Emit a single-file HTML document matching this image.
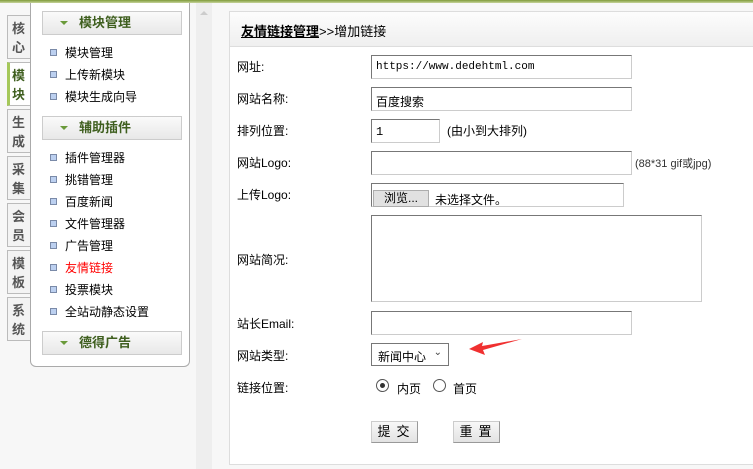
<!DOCTYPE html>
<html><head><meta charset="utf-8"><style>
*{margin:0;padding:0;box-sizing:border-box}
body{width:753px;height:469px;overflow:hidden;background:#f7f7f7;font-family:"Liberation Sans","Noto Sans CJK SC",sans-serif;font-size:12px;color:#000;position:relative}
.abs{position:absolute}
.top{left:0;top:0;width:753px;height:3px;background:linear-gradient(#7f9a3a,#c6d49a)}
.tab{position:absolute;left:7px;width:24px;height:44px;border:1px solid #bbb;border-right:none;background:#f3f3f3;color:#555;font-weight:bold;font-size:13px;line-height:19px;padding:3px 0 0 4px}
.tab.on{background:#fff;border-left:3px solid #a5c85a;color:#3f5f1f;padding-left:2px}
.menu{left:30px;top:3px;width:160px;height:364px;background:#fff;border:1px solid #aaa;border-top:none;border-radius:0 0 6px 6px}
.mh{position:absolute;left:11px;width:140px;height:24px;border:1px solid #ccc;background:linear-gradient(#fafafa,#e8e8e8);color:#3f5f1f;font-weight:bold;font-size:13px;line-height:22px;padding-left:36px}
.mh:before{content:"";position:absolute;left:17px;top:9px;border:4px solid transparent;border-top:4px solid #6a9a3a;border-bottom:none;width:0}
.mi{position:absolute;left:19px;font-size:12px;line-height:14px}
.mi:before{content:"";display:inline-block;width:5px;height:5px;border:1px solid #7a8aa8;background:#bcd0f0;margin-right:8px;vertical-align:1px}
.sb{left:196px;top:3px;width:16px;height:466px;background:#eee}
.panel{left:229px;top:11px;width:530px;height:454px;background:#fff;border:1px solid #ddd}
.hd{left:229px;top:11px;width:530px;height:36px;background:linear-gradient(#fdfdfd,#efefef);border:1px solid #ddd;padding:9px 0 0 11px;font-size:13px}
.lb{position:absolute;left:237px;font-size:12px}
.in{position:absolute;left:371px;height:24px;border:1px solid #ccc;border-top-color:#777;border-left-color:#777;background:#fff;font-size:12px;padding:5px 0 0 4px}
.btn{position:absolute;top:421px;height:22px;width:47px;background:linear-gradient(#f8f8f8,#e2e2e2);border:1px solid #ccc;border-right-color:#999;border-bottom-color:#999;font-size:13px;text-align:center;line-height:20px;letter-spacing:6px;padding-left:4px}
.rad{position:absolute;top:379px;width:13px;height:13px;border:1px solid #555;border-radius:50%;background:#fff}
</style></head><body>
<div class="abs top"></div>
<div class="tab" style="top:15px">核<br>心</div>
<div class="tab on" style="top:62px">模<br>块</div>
<div class="tab" style="top:109px">生<br>成</div>
<div class="tab" style="top:156px">采<br>集</div>
<div class="tab" style="top:203px">会<br>员</div>
<div class="tab" style="top:250px">模<br>板</div>
<div class="tab" style="top:297px">系<br>统</div>
<div class="abs menu">
<div class="mh" style="top:8px">模块管理</div>
<div class="mi" style="top:43px">模块管理</div>
<div class="mi" style="top:65px">上传新模块</div>
<div class="mi" style="top:87px">模块生成向导</div>
<div class="mh" style="top:113px">辅助插件</div>
<div class="mi" style="top:148px">插件管理器</div>
<div class="mi" style="top:170px">挑错管理</div>
<div class="mi" style="top:192px">百度新闻</div>
<div class="mi" style="top:214px">文件管理器</div>
<div class="mi" style="top:236px">广告管理</div>
<div class="mi" style="top:258px;color:#f00">友情链接</div>
<div class="mi" style="top:280px">投票模块</div>
<div class="mi" style="top:302px">全站动静态设置</div>
<div class="mh" style="top:328px">德得广告</div>
</div>
<div class="abs sb"><div style="position:absolute;left:4px;top:8px;border:4px solid transparent;border-bottom:4px solid #ccc;border-top:none"></div></div>
<div class="abs panel"></div>
<div class="abs hd"><b style="text-decoration:underline">友情链接管理</b>&gt;&gt;增加链接</div>
<div class="lb" style="top:58px">网址:</div>
<div class="in" style="top:55px;width:261px;font-family:'Liberation Mono',monospace;font-size:11px">https://www.dedehtml.com</div>
<div class="lb" style="top:90px">网站名称:</div>
<div class="in" style="top:87px;width:261px">百度搜索</div>
<div class="lb" style="top:122px">排列位置:</div>
<div class="in" style="top:119px;width:69px;font-family:'Liberation Mono',monospace">1</div>
<div class="lb" style="top:122px;left:447px">(由小到大排列)</div>
<div class="lb" style="top:154px">网站Logo:</div>
<div class="in" style="top:151px;width:261px"></div>
<div class="lb" style="top:155px;left:635px;font-size:11px;color:#333">(88*31 gif或jpg)</div>
<div class="lb" style="top:186px">上传Logo:</div>
<div class="in" style="top:183px;width:253px;padding:0"><div style="position:absolute;left:1px;top:6px;width:56px;height:17px;background:#e1e1e1;border:1px solid #adadad;font-size:12px;text-align:center;line-height:15px">浏览...</div><span style="position:absolute;left:63px;top:7px">未选择文件。</span></div>
<div class="in" style="top:215px;width:331px;height:87px"></div>
<div class="lb" style="top:251px">网站简况:</div>
<div class="lb" style="top:315px">站长Email:</div>
<div class="in" style="top:311px;width:261px"></div>
<div class="lb" style="top:347px">网站类型:</div>
<div class="in" style="top:343px;width:78px;height:23px;border:1px solid #777;font-size:12px;padding:4px 0 0 6px">新闻中心<span style="position:absolute;right:6px;top:3px;font-size:10px;color:#444">&#8964;</span></div>
<svg class="abs" style="left:465px;top:337px" width="60" height="20"><polygon points="4,12 18,5 17,9 57,2 18,13 20,18" fill="#f03030"/></svg>
<div class="lb" style="top:379px">链接位置:</div>
<div class="rad" style="left:376px"><div style="position:absolute;left:3px;top:3px;width:5px;height:5px;border-radius:50%;background:#333"></div></div>
<div class="lb" style="top:380px;left:397px">内页</div>
<div class="rad" style="left:433px"></div>
<div class="lb" style="top:380px;left:453px">首页</div>
<div class="btn" style="left:371px">提交</div>
<div class="btn" style="left:453px">重置</div>
</body></html>
